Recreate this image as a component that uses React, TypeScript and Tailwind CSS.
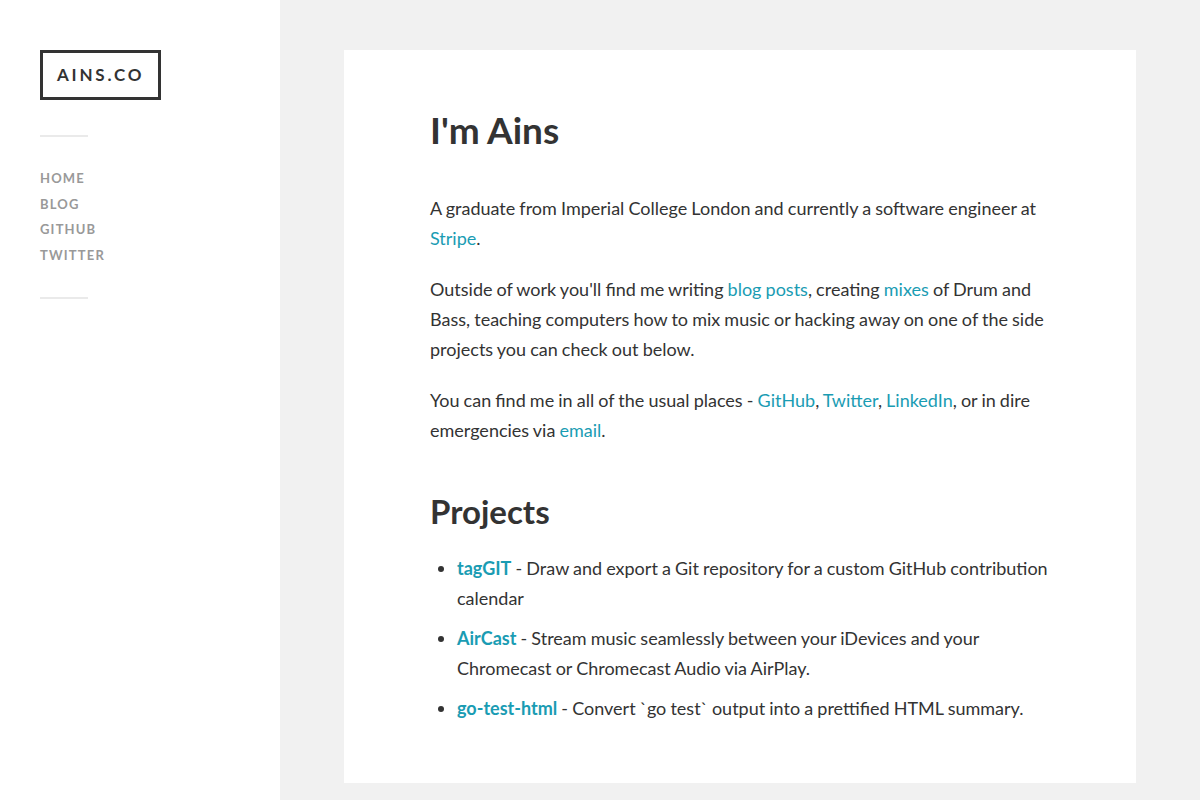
const nav = ["Home", "Blog", "GitHub", "Twitter"];

function A({ children, bold }: { children: React.ReactNode; bold?: boolean }) {
  return (
    <a href="#" className={bold ? "font-bold text-[#1a9cb3]" : "text-[#1a9cb3]"}>
      {children}
    </a>
  );
}

const projects = [
  {
    name: "tagGIT",
    desc: "Draw and export a Git repository for a custom GitHub contribution calendar",
  },
  {
    name: "AirCast",
    desc: "Stream music seamlessly between your iDevices and your Chromecast or Chromecast Audio via AirPlay.",
  },
  {
    name: "go-test-html",
    desc: "Convert `go test` output into a prettified HTML summary.",
  },
];

export default function App() {
  return (
    <div className="flex min-h-[800px] bg-[#f1f1f1] font-['Lato',sans-serif] text-[#333]">
      <aside className="w-[280px] shrink-0 bg-white px-10 pt-[50px]">
        <a
          href="#"
          className="inline-block border-[3px] border-[#333] px-[14px] py-[9px] text-[17px] font-bold uppercase leading-[26px] tracking-[0.165em] text-[#333]"
        >
          ains.co
        </a>
        <div className="mt-[35px] h-[2px] w-12 bg-[#eaeaea]" />
        <nav className="mt-[29px] flex flex-col">
          {nav.map((n) => (
            <a
              key={n}
              href="#"
              className="text-[13px] font-bold uppercase leading-[25.6px] tracking-[0.09em] text-[#999]"
            >
              {n}
            </a>
          ))}
        </nav>
        <div className="mt-[29px] h-[2px] w-12 bg-[#eaeaea]" />
      </aside>

      <main className="flex-1 pl-16 pr-16 pt-[50px] pb-4">
        <article className="w-[792px] bg-white px-[86px] pt-[58px] pb-[60px] text-[18px] leading-[30px] [word-spacing:-0.5px]">
          <h1 className="text-[37px] font-bold leading-[44px]">I'm Ains</h1>
          <p className="mt-[41px]">
            A graduate from Imperial College London and currently a software engineer at{" "}
            <A>Stripe</A>.
          </p>
          <p className="mt-[21px]">
            Outside of work you'll find me writing <A>blog posts</A>, creating <A>mixes</A> of Drum
            and Bass, teaching computers how to mix music or hacking away on one of the side
            projects you can check out below.
          </p>
          <p className="mt-[21px]">
            You can find me in all of the usual places - <A>GitHub</A>, <A>Twitter</A>,{" "}
            <A>LinkedIn</A>, or in dire emergencies via <A>email</A>.
          </p>
          <h2 className="mt-[46px] text-[33px] font-bold leading-[40px]">Projects</h2>
          <ul className="mt-[22px] list-disc pl-[27px]">
            {projects.map((p) => (
              <li key={p.name} className="mb-[10px] last:mb-0">
                <A bold>{p.name}</A> - {p.desc}
              </li>
            ))}
          </ul>
        </article>
      </main>
    </div>
  );
}
